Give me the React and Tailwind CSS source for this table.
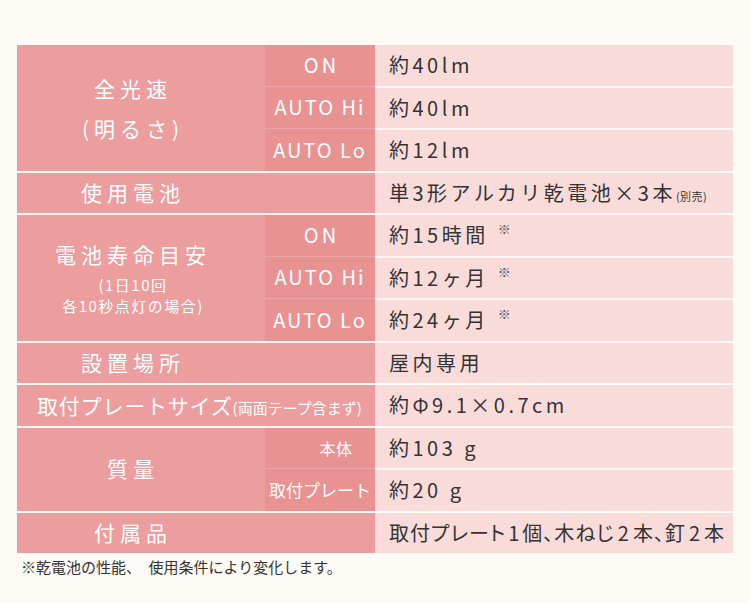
import React from "react";

const C1 = "bg-[#ec9d9d]";
const C2 = "bg-[#e99292]";
const C3 = "bg-[#f9dcd9]";
const FONT = { fontFamily: '"Noto Sans CJK JP", "Noto Sans", sans-serif' };

function Sup() {
  return <span className="relative -top-[9px] ml-[9px] text-[13px] tracking-normal text-[#555]">※</span>;
}

function ValueCell({ children, first, className = "" }) {
  return (
    <div
      className={`${C3} flex items-center pl-[14px] text-[20px] tracking-[3.5px] text-[#333] ${
        first ? "h-[40.5px]" : "h-[42.5px] border-t-2 border-[#fdf8f4]"
      } ${className}`}
    >
      {children}
    </div>
  );
}

function SubCell({ children, first, className = "" }) {
  return (
    <div
      className={`${C2} flex items-center justify-center text-white ${
        first ? "h-[40.5px]" : "h-[42.5px] border-t-[1.5px] border-[#efa5a5]"
      } ${className}`}
    >
      {children}
    </div>
  );
}

function GroupRow({ label, subs }) {
  return (
    <div className="flex">
      <div className={`${C1} w-[248px] flex flex-col items-center justify-center pr-[16px] text-white`}>
        {label}
      </div>
      <div className="flex flex-col w-[110px]">
        {subs.map((s, i) => (
          <SubCell key={i} first={i === 0} className={s.subClass}>
            {s.sub}
          </SubCell>
        ))}
      </div>
      <div className="flex flex-col flex-1">
        {subs.map((s, i) => (
          <ValueCell key={i} first={i === 0} className={s.valClass}>
            {s.val}
          </ValueCell>
        ))}
      </div>
    </div>
  );
}

function SingleRow({ label, val, labelWide, valClass = "" }) {
  return (
    <div className="flex h-[40.5px]">
      {labelWide ? (
        <div className={`${C1} w-[358px] flex items-center pl-[20px] text-white`}>{labelWide}</div>
      ) : (
        <>
          <div className={`${C1} w-[248px] flex items-center justify-center pr-[16px] text-white text-[21px] tracking-[5px]`}>
            {label}
          </div>
          <div className={`${C1} w-[110px]`} />
        </>
      )}
      <div className={`${C3} flex-1 flex items-center pl-[14px] text-[20px] tracking-[3.5px] text-[#333] ${valClass}`}>
        {val}
      </div>
    </div>
  );
}

const autoCls = "text-[20px] tracking-[2px]";

export default function App() {
  return (
    <div className="w-[750px] h-[603px] bg-[#fefaf6]" style={FONT}>
      <div className="pt-[45px] pl-[17px]">
        <div className="w-[716px] flex flex-col gap-[2px]">
          <GroupRow
            label={
              <div className="flex flex-col items-center text-[21px] leading-[40px] tracking-[5px]">
                <span>全光速</span>
                <span>(明るさ)</span>
              </div>
            }
            subs={[
              { sub: <span className={`${autoCls} !tracking-[3px] pl-[3px]`}>ON</span>, val: "約40lm" },
              { sub: <span className={autoCls}>AUTO Hi</span>, val: "約40lm" },
              { sub: <span className={autoCls}>AUTO Lo</span>, val: "約12lm" },
            ]}
          />
          <SingleRow
            label="使用電池"
            val={
              <span>
                単3形アルカリ乾電池×3本<span className="text-[11px] tracking-[0.5px]">(別売)</span>
              </span>
            }
          />
          <GroupRow
            label={
              <div className="flex flex-col items-center">
                <span className="text-[21px] leading-[30px] tracking-[5px]">電池寿命目安</span>
                <span className="text-[15px] leading-[21px] tracking-[1.5px] mt-[5px]">(1日10回</span>
                <span className="text-[15px] leading-[21px] tracking-[1.5px]">各10秒点灯の場合)</span>
              </div>
            }
            subs={[
              { sub: <span className={`${autoCls} !tracking-[3px] pl-[3px]`}>ON</span>, val: <span>約15時間<Sup /></span> },
              { sub: <span className={autoCls}>AUTO Hi</span>, val: <span>約12ヶ月<Sup /></span> },
              { sub: <span className={autoCls}>AUTO Lo</span>, val: <span>約24ヶ月<Sup /></span> },
            ]}
          />
          <SingleRow label="設置場所" val="屋内専用" />
          <SingleRow
            labelWide={
              <span className="text-[21px] tracking-[0.8px]">
                取付プレートサイズ<span className="text-[15px] tracking-normal">(両面テープ含まず)</span>
              </span>
            }
            val="約Φ9.1×0.7cm"
          />
          <GroupRow
            label={<span className="text-[21px] tracking-[5px]">質量</span>}
            subs={[
              { sub: <span className="text-[16px] tracking-[0.5px]">本体</span>, subClass: "pl-[32px]", val: "約103 g" },
              { sub: <span className="text-[17px]">取付プレート</span>, val: "約20 g" },
            ]}
          />
          <SingleRow
            label="付属品"
            val={
              <span>
                取付プレート<span className="px-[2px]">1</span>個、木ねじ<span className="px-[3px]">2</span>本、釘<span className="px-[3px]">2</span>本
              </span>
            }
            valClass="!tracking-[1px] text-[19.5px] [font-feature-settings:'palt']"
          />
        </div>
        <div className="pt-[3px] pl-[4px] text-[15px] text-[#333] leading-[22px]">
          ※乾電池の性能、　使用条件により変化します。
        </div>
      </div>
    </div>
  );
}
